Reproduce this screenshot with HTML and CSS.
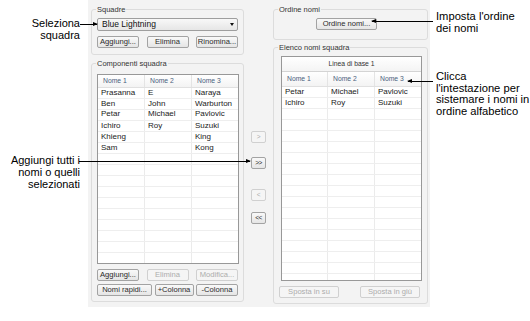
FILE: index.html
```html
<!DOCTYPE html>
<html lang="it">
<head>
<meta charset="utf-8">
<title>Squadre</title>
<link rel="stylesheet" href="styles.css">
</head>
<body>
<div class="page">
  <div class="dialog">
    <div class="col col-left">
      <div class="group g-squadre">
        <span class="glabel">Squadre</span>
        <div class="combo"><span class="combo-text">Blue Lightning</span><span class="caret"></span></div>
        <div class="btnrow row-squadre">
          <button class="btn w42">Aggiungi...</button>
          <button class="btn w42">Elimina</button>
          <button class="btn w42">Rinomina...</button>
        </div>
      </div>
      <div class="group g-comp">
        <span class="glabel">Componenti squadra</span>
        <div class="tbl tbl-left">
          <div class="trow thead"><span>Nome 1</span><span>Nome 2</span><span>Nome 3</span></div>
          <div class="trow"><span>Prasanna</span><span>E</span><span>Naraya</span></div>
          <div class="trow"><span>Ben</span><span>John</span><span>Warburton</span></div>
          <div class="trow raised"><span>Petar</span><span>Michael</span><span>Pavlovic</span></div>
          <div class="trow"><span>Ichiro</span><span>Roy</span><span>Suzuki</span></div>
          <div class="trow"><span>Khieng</span><span></span><span>King</span></div>
          <div class="trow"><span>Sam</span><span></span><span>Kong</span></div>
          <div class="trow"><span></span><span></span><span></span></div>
          <div class="trow"><span></span><span></span><span></span></div>
          <div class="trow"><span></span><span></span><span></span></div>
          <div class="trow"><span></span><span></span><span></span></div>
          <div class="trow"><span></span><span></span><span></span></div>
          <div class="trow"><span></span><span></span><span></span></div>
          <div class="trow"><span></span><span></span><span></span></div>
          <div class="trow"><span></span><span></span><span></span></div>
          <div class="trow"><span></span><span></span><span></span></div>
          <div class="trow"><span></span><span></span><span></span></div>
        </div>
        <div class="btnrow row-comp1">
          <button class="btn w42">Aggiungi...</button>
          <button class="btn w42 dis">Elimina</button>
          <button class="btn w42 dis">Modifica...</button>
        </div>
        <div class="btnrow row-comp2">
          <button class="btn w55">Nomi rapidi...</button>
          <button class="btn w39">+Colonna</button>
          <button class="btn w42">-Colonna</button>
        </div>
      </div>
    </div>
    <div class="col col-mid">
      <button class="btn arrow dis b1">&gt;</button>
      <button class="btn arrow b2">&gt;&gt;</button>
      <button class="btn arrow dis b3">&lt;</button>
      <button class="btn arrow b4">&lt;&lt;</button>
    </div>
    <div class="col col-right">
      <div class="group g-ordine">
        <span class="glabel">Ordine nomi</span>
        <button class="btn btn-ordine">Ordine nomi...</button>
      </div>
      <div class="group g-elenco">
        <span class="glabel">Elenco nomi squadra</span>
        <div class="tbl tbl-right">
          <div class="thead1">Linea di base 1</div>
          <div class="trow thead thead2"><span>Nome 1</span><span>Nome 2</span><span>Nome 3</span></div>
          <div class="trow"><span>Petar</span><span>Michael</span><span>Pavlovic</span></div>
          <div class="trow"><span>Ichiro</span><span>Roy</span><span>Suzuki</span></div>
          <div class="trow"><span></span><span></span><span></span></div>
          <div class="trow"><span></span><span></span><span></span></div>
          <div class="trow"><span></span><span></span><span></span></div>
          <div class="trow"><span></span><span></span><span></span></div>
          <div class="trow"><span></span><span></span><span></span></div>
          <div class="trow"><span></span><span></span><span></span></div>
          <div class="trow"><span></span><span></span><span></span></div>
          <div class="trow"><span></span><span></span><span></span></div>
          <div class="trow"><span></span><span></span><span></span></div>
          <div class="trow"><span></span><span></span><span></span></div>
          <div class="trow"><span></span><span></span><span></span></div>
          <div class="trow"><span></span><span></span><span></span></div>
          <div class="trow"><span></span><span></span><span></span></div>
          <div class="trow"><span></span><span></span><span></span></div>
          <div class="trow"><span></span><span></span><span></span></div>
          <div class="trow"><span></span><span></span><span></span></div>
        </div>
        <div class="btnrow row-sposta">
          <button class="btn w60 dis">Sposta in su</button>
          <button class="btn w60 dis">Sposta in giù</button>
        </div>
      </div>
    </div>
  </div>

  <div class="callout c-sel">Seleziona<br>squadra</div>
  <div class="leader to-right l-sel"></div>

  <div class="callout c-ord">Imposta l'ordine<br>dei nomi</div>
  <div class="leader to-left l-ord"></div>

  <div class="callout c-int">Clicca<br>l'intestazione per<br>sistemare i nomi in<br>ordine alfabetico</div>
  <div class="leader to-left l-int"></div>

  <div class="callout c-add">Aggiungi tutti i<br>nomi o quelli<br>selezionati</div>
  <div class="leader to-right l-add"></div>
</div>
</body>
</html>
```
FILE: styles.css
```css
html, body {
  margin: 0;
  background: #ffffff;
}
body {
  font-family: "Liberation Sans", Arial, sans-serif;
}
.page {
  position: relative;
  width: 530px;
  height: 321px;
  overflow: hidden;
}
.dialog {
  margin-left: 88px;
  width: 342px;
  height: 307px;
  box-sizing: border-box;
  padding: 9px 2px 0 3px;
  background: #f3f3f3;
  display: flex;
  align-items: flex-start;
  font-size: 7.5px;
  color: #2a2a2a;
}
.col {
  display: flex;
  flex-direction: column;
  align-items: flex-start;
}
.col-left { width: 153px; }
.col-mid { width: 29px; box-sizing: border-box; padding: 122px 0 0 7px; }
.col-right { width: 155px; }

.group {
  width: 100%;
  box-sizing: border-box;
  border: 1px solid #dcdcdc;
  border-radius: 3px;
  display: flex;
  flex-direction: column;
  align-items: flex-start;
  padding: 0 0 0 5px;
}
.glabel {
  margin: -5px 0 0 -1px;
  padding: 0 1px;
  height: 9px;
  line-height: 9px;
  background: #f3f3f3;
  color: #333;
  white-space: nowrap;
}
.g-squadre { padding-bottom: 6px; }
.g-comp { margin-top: 8px; padding-bottom: 5px; }
.g-ordine { padding-bottom: 9px; }
.g-elenco { margin-top: 7px; padding-bottom: 5px; }

/* buttons */
.btn {
  box-sizing: border-box;
  height: 12px;
  margin: 0;
  padding: 0;
  border: 1px solid #a3a3a3;
  border-radius: 2px;
  background: linear-gradient(#f9f9f9, #e5e5e5);
  font-family: "Liberation Sans", Arial, sans-serif;
  font-size: 7.6px;
  line-height: 10px;
  color: #2a2a2a;
  text-align: center;
  white-space: nowrap;
  overflow: hidden;
}
.btn.dis {
  border-color: #d0d0d0;
  background: #f5f5f5;
  color: #acacac;
}
.w42 { width: 42px; }
.w55 { width: 55px; }
.w39 { width: 39px; }
.w60 { width: 60px; }

.btnrow {
  display: flex;
  justify-content: space-between;
  width: 141px;
}
.row-squadre { margin-top: 5px; }
.row-comp1 { margin-top: 5px; }
.row-comp2 { margin-top: 3px; }
.row-sposta { margin-top: 5px; width: 141px; }

.combo {
  margin-top: 4px;
  width: 141px;
  height: 13px;
  box-sizing: border-box;
  border: 1px solid #9e9e9e;
  border-radius: 2px;
  background: linear-gradient(#f8f8f8, #e6e6e6);
  display: flex;
  align-items: center;
  justify-content: space-between;
  padding: 0 3px 0 4px;
}
.combo-text {
  font-size: 8.5px;
  color: #111;
  line-height: 11px;
}
.caret {
  width: 0;
  height: 0;
  border-left: 2.5px solid transparent;
  border-right: 2.5px solid transparent;
  border-top: 3px solid #111;
}

/* middle arrows */
.arrow {
  width: 15px;
  height: 12px;
  font-size: 6.5px;
  letter-spacing: -0.5px;
}
.b2 { margin-top: 14px; }
.b3 { margin-top: 20px; }
.b4 { margin-top: 11px; }

.btn-ordine {
  margin: 4px 0 0 37px;
  width: 61px;
}

/* tables */
.tbl {
  box-sizing: border-box;
  border: 1px solid #989898;
  background: #ffffff;
  overflow: hidden;
}
.tbl-left {
  margin-top: 6px;
  width: 142px;
  height: 190px;
}
.tbl-right {
  margin: 4px 0 0 2px;
  width: 141px;
  height: 225px;
}
.trow {
  display: grid;
  grid-template-columns: 47px 47px 1fr;
  height: 11px;
  box-sizing: border-box;
  border-bottom: 1px solid #eeeeee;
}
.tbl-right .trow {
  grid-template-columns: 46px 47px 1fr;
}
.trow span {
  border-right: 1px solid #ebebeb;
  padding-left: 3px;
  font-size: 8px;
  line-height: 10px;
  color: #1a1a1a;
  white-space: nowrap;
  overflow: visible;
}
.trow.raised span {
  line-height: 7px;
}
.trow span:last-child { border-right: none; }
.thead {
  height: 13px;
  background: linear-gradient(#ffffff, #f3f3f3);
  border-bottom: 1px solid #e0e0e0;
}
.thead span {
  padding-left: 5px;
  font-size: 6.8px;
  line-height: 12px;
  color: #4b5f7e;
  border-right: 1px solid #e4e4e4;
}
.thead2 { height: 15px; }
.thead2 span { line-height: 14px; }
.thead1 {
  height: 15px;
  box-sizing: border-box;
  border-bottom: 1px solid #d4d4d4;
  background: linear-gradient(#ffffff, #f4f4f4);
  text-align: center;
  font-size: 6.8px;
  line-height: 14px;
  color: #333;
}

/* annotations */
.callout {
  position: absolute;
  font-family: "Liberation Sans", Arial, sans-serif;
  font-size: 11px;
  line-height: 12px;
  color: #000;
  white-space: nowrap;
}
.c-sel { right: 450px; top: 17px; text-align: right; }
.c-add { right: 450px; top: 154px; text-align: right; }
.c-ord { left: 436px; top: 10px; font-size: 11.2px; }
.c-int { left: 436px; top: 71px; line-height: 11.7px; font-size: 11.2px; }

.leader {
  position: absolute;
  height: 1px;
  background: #000;
}
.leader.to-right::after {
  content: "";
  position: absolute;
  right: -1px;
  top: -2px;
  border-left: 5px solid #000;
  border-top: 2.5px solid transparent;
  border-bottom: 2.5px solid transparent;
}
.leader.to-left::before {
  content: "";
  position: absolute;
  left: -1px;
  top: -2px;
  border-right: 5px solid #000;
  border-top: 2.5px solid transparent;
  border-bottom: 2.5px solid transparent;
}
.l-sel { left: 80px; top: 24px; width: 17px; }
.l-ord { left: 372px; top: 21px; width: 61px; }
.l-int { left: 408px; top: 81px; width: 25px; }
.l-add { left: 79px; top: 161px; width: 171px; }
```
